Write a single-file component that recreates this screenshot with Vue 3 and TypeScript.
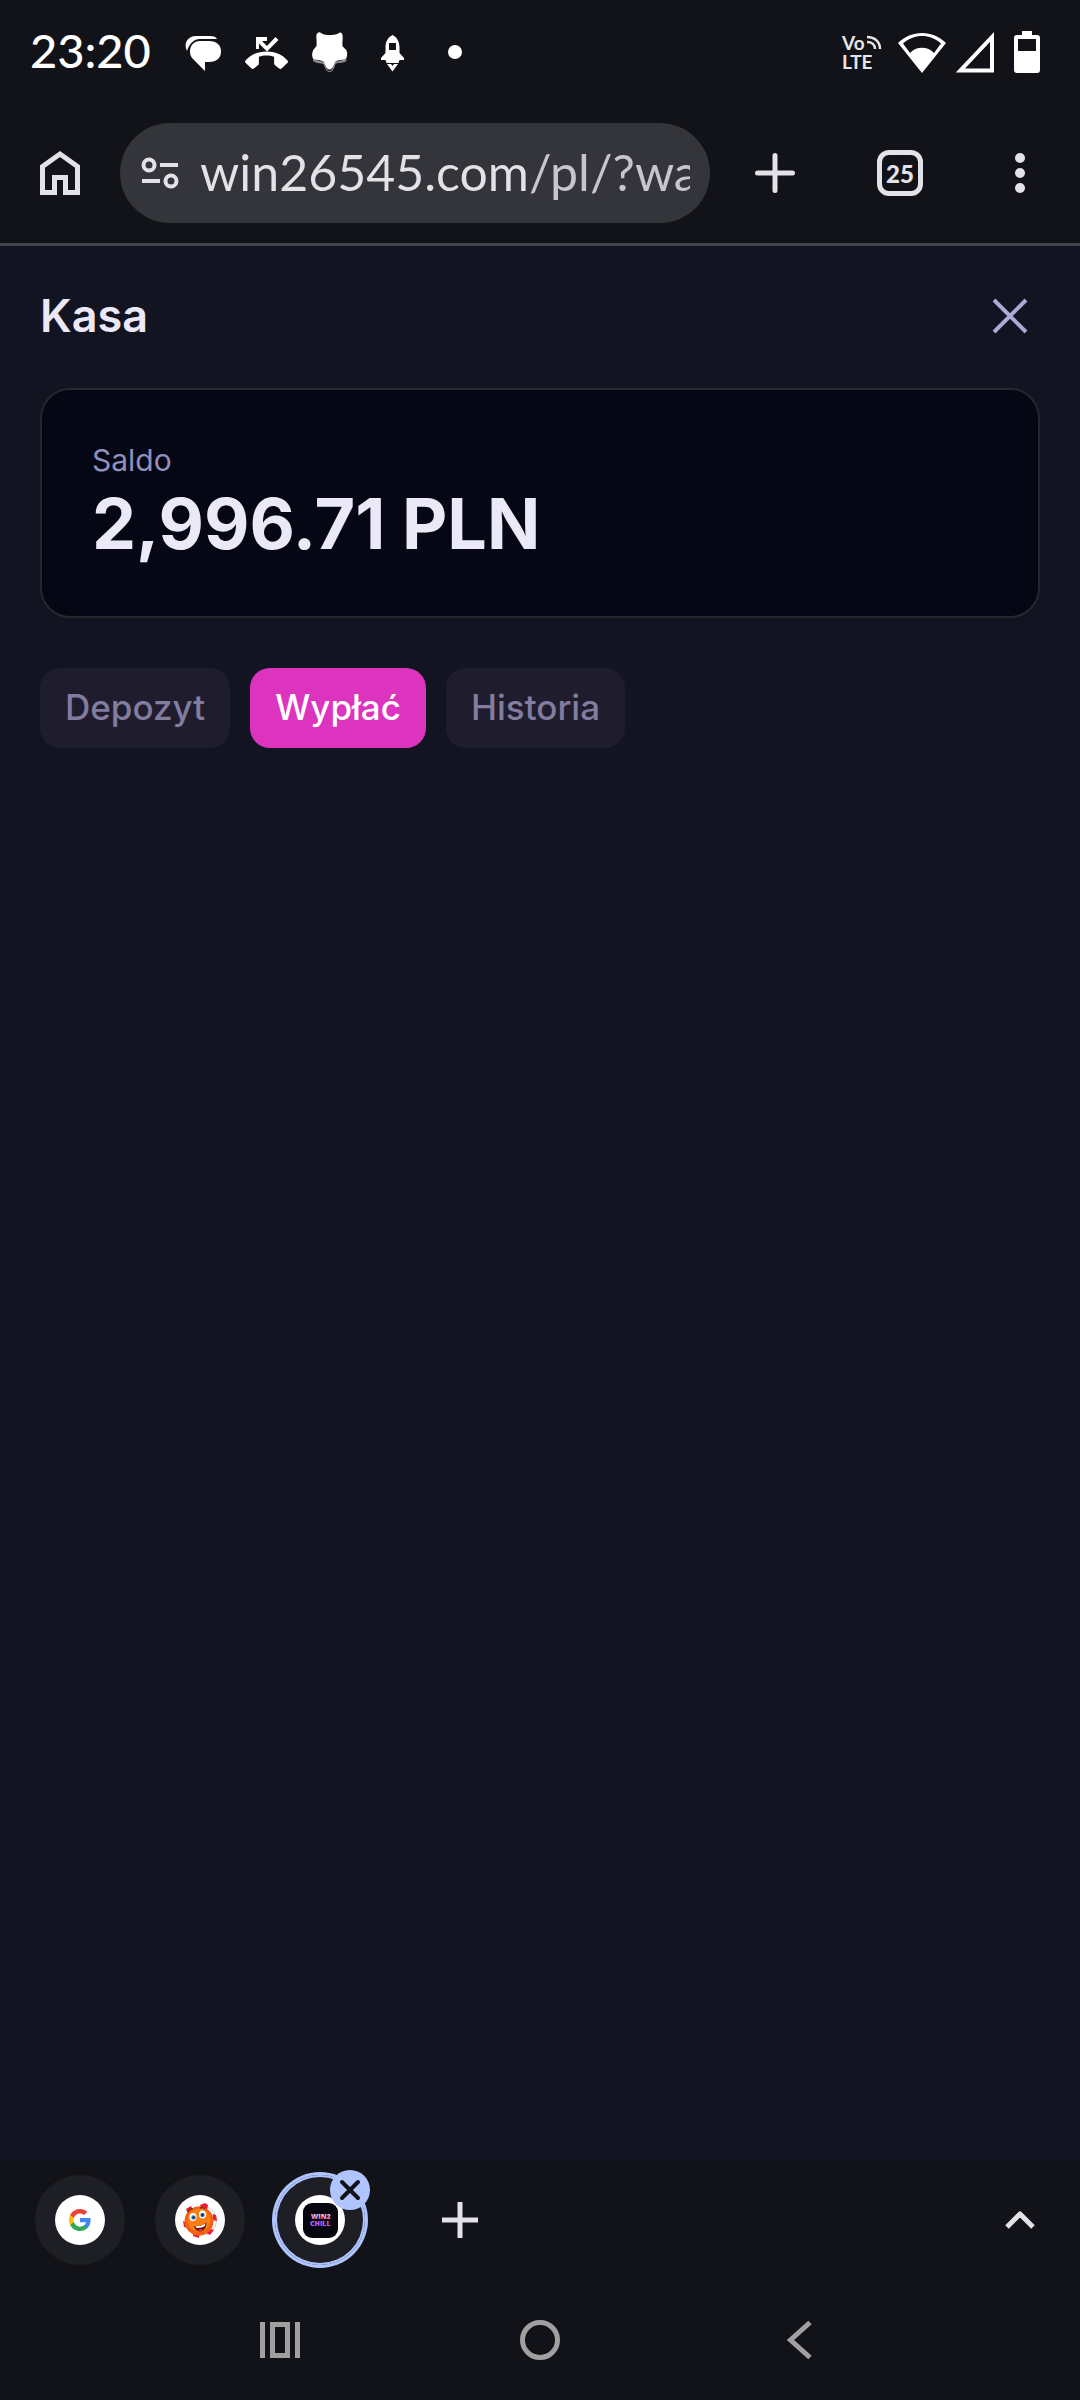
<script setup lang="ts">
import { ref } from 'vue'

const address = ref('win26545.com/pl/?wa')
const tabs = ['Depozyt', 'Wypłać', 'Historia']
const activeTab = ref('Wypłać')
</script>

<template>
  <div class="screen">
    <div class="status-bar">
      <time class="clock">23:20</time>
      <div class="notifications">
        <svg width="43" height="44" viewBox="0 0 43 44" fill="#fff">
          <path d="M5 21C1 13 6 6 14 6h14c4 0 6 1 7 3H18C11 9 7 15 5 21Z" />
          <path d="M18 11h9c8 0 12 4.500 12 10.500S35 32 27 32h-4v9L11 29c-2-2-3-4-3-7.500C8 15.500 12 11 18 11Z" />
        </svg>
        <svg width="43" height="44" viewBox="0 0 43 44" fill="#fff">
          <path d="M11 7h11v4h-5l5 5 8.500-9 3 3L22 21.500l-8-8V19h-3Z" />
          <path d="M21.500 21.500C13 21.500 5.500 24.500.5 30.500c-.8 1-.6 1.800.2 2.600l5.500 5.200c.9.900 1.800.9 2.700.2l4-3.200c.8-.7 1-1.300 1-2.300v-6.200c4.500-1.800 10.500-1.800 15.200 0V33c0 1 .2 1.600 1 2.300l4 3.200c.9.700 1.800.7 2.700-.2l5.500-5.200c.8-.8 1-1.600.2-2.600-5-6-12.500-9-21-9Z" />
        </svg>
        <svg width="43" height="44" viewBox="0 0 43 44">
          <path d="M5 27c5 5 9 4 12 5 1 5 2 9 4.500 9S25 37 26 32c3-1 7 0 12-5l.5 4c-5 3-8 1-11 3-1 4-3 8-6 8s-4.500-4-6-8c-3-1-6 0-10.500-3Z" fill="#8b8c90" />
          <path d="M9 4c1-2 3-2 4-1 3 2 6 2 8.500 2S28 5 31 3c2-1 3 0 3.500 2 .5 4-.5 8 0 11 1 2 4 3 4.500 6s0 5-1 6.500c-3 2-8 1-10.500 3-2 3-3 8-6 8s-4-5-6-8c-3-2-7.500-1-10.500-3-1-2-1-4-.5-6.500.5-3 3-4 4-6 .5-4-.5-8 0-12Z" fill="#fff" />
        </svg>
        <svg width="43" height="44" viewBox="0 0 43 44" fill="#fff">
          <path fill-rule="evenodd" d="M21.500 5c-4.500 2-7 7-7 12v6l-4.500 5v2h4.500l1 3h12l1-3H33v-2l-4.500-5v-6c0-5-2.500-10-7-12Zm-3.500 8h7v7h-7Z" />
          <path d="M16 34h4l1.500 2 1.500-2h4l-5.500 7.500Z" />
        </svg>
        <svg width="43" height="44" viewBox="0 0 43 44" fill="#fff"><circle cx="21" cy="22" r="7" /></svg>
      </div>
      <div class="signals">
        <div class="volte">
          <span>Vo</span><span>LTE</span>
          <svg class="volte-waves" width="15" height="15" viewBox="0 0 15 15" fill="none" stroke="#e6e6e8" stroke-width="2.500">
            <path d="M0 2c8 0 13 5 13 12M0 7c5 0 8 3 8 7" />
          </svg>
        </div>
        <svg width="50" height="44" viewBox="0 0 50 44" fill="#fff">
          <path fill-rule="evenodd" d="M1 13C14-.5 36-.5 49 13L25 43Zm5 .5L13 23c6-7 18-7 24 0l7-9.500C33 3.500 17 3.500 6 13.500Z" />
        </svg>
        <svg width="40" height="44" viewBox="0 0 40 44"><path d="M4.500 40.500h31.500V7Z" fill="none" stroke="#fff" stroke-width="4" /></svg>
        <svg class="battery" width="26" height="44" viewBox="0 0 26 44" fill="#fff">
          <path fill-rule="evenodd" d="M8 1h10v4h5q3 0 3 3v32q0 3-3 3H3q-3 0-3-3V8q0-3 3-3h5ZM4 9v12h18V9Z" />
        </svg>
      </div>
    </div>

    <header class="toolbar">
      <button class="tool" aria-label="Home">
        <svg width="40" height="46" viewBox="0 0 40 46" fill="none" stroke="#e4e2e9" stroke-width="5">
          <path d="M2.500 42.500V16.500L20 4l17.500 12.500v26H25.500V27.500h-11v15Z" />
        </svg>
      </button>
      <div class="omnibox">
        <svg class="site-info" width="40" height="34" viewBox="0 0 40 34" fill="none" stroke="#e4e2e9" stroke-width="4">
          <circle cx="9" cy="9" r="5.500" /><path d="M20 9h18M2 25h18" /><circle cx="31" cy="25" r="5.500" />
        </svg>
        <input v-model="address" class="address" type="text" aria-label="Address" spellcheck="false" />
      </div>
      <button class="tool wide" aria-label="New tab">
        <svg width="40" height="40" viewBox="0 0 40 40" stroke="#e4e2e9" stroke-width="5" stroke-linecap="round"><path d="M20 2.500v35M2.500 20h35" /></svg>
      </button>
      <button class="tool" aria-label="Open tabs"><span class="tab-count">25</span></button>
      <button class="tool" aria-label="Menu">
        <svg width="10" height="40" viewBox="0 0 10 40" fill="#e4e2e9"><circle cx="5" cy="5" r="5" /><circle cx="5" cy="20" r="5" /><circle cx="5" cy="35" r="5" /></svg>
      </button>
    </header>

    <main class="cashier">
      <div class="heading">
        <h1>Kasa</h1>
        <button class="close" aria-label="Zamknij">
          <svg width="36" height="36" viewBox="0 0 36 36" stroke="#aaaad6" stroke-width="4"><path d="M2 2l32 32M34 2L2 34" /></svg>
        </button>
      </div>
      <section class="balance">
        <p class="balance-label">Saldo</p>
        <p class="balance-amount">2,996.71 PLN</p>
      </section>
      <nav class="tabs">
        <button v-for="tab in tabs" :key="tab" class="tab" :class="{ active: tab === activeTab }" @click="activeTab = tab">{{ tab }}</button>
      </nav>
    </main>

    <footer>
      <div class="tab-strip">
        <button class="site" aria-label="Google">
          <span class="favicon">
            <svg width="22" height="22" viewBox="1 1 22 22">
              <path fill="#4285f4" d="M22.560 12.250c0-.78-.07-1.530-.2-2.250H12v4.260h5.920c-.26 1.370-1.040 2.530-2.210 3.310v2.770h3.570c2.080-1.920 3.280-4.740 3.280-8.090z" />
              <path fill="#34a853" d="M12 23c2.970 0 5.460-.98 7.280-2.660l-3.570-2.770c-.98.66-2.230 1.060-3.710 1.060-2.860 0-5.290-1.930-6.160-4.530H2.180v2.840C3.990 20.530 7.700 23 12 23z" />
              <path fill="#fbbc05" d="M5.840 14.090c-.22-.66-.35-1.360-.35-2.090s.13-1.430.35-2.090V7.070H2.180C1.430 8.550 1 10.220 1 12s.43 3.450 1.180 4.930l3.660-2.840z" />
              <path fill="#ea4335" d="M12 5.380c1.620 0 3.060.56 4.210 1.640l3.150-3.150C17.450 2.090 14.970 1 12 1 7.700 1 3.990 3.470 2.180 7.070l3.660 2.840c.87-2.600 3.300-4.530 6.160-4.530z" />
            </svg>
          </span>
        </button>
        <button class="site" aria-label="Casino chip">
          <span class="favicon">
            <svg width="36" height="36" viewBox="0 0 36 36">
              <circle cx="20" cy="18.500" r="14.500" fill="#fff" stroke="#d0cdd0" />
              <path d="M18 3l5-2 3 2-1 5-6-1ZM31 12l3 1 1 6-5-1ZM29 27l3 1-4 5-4-2ZM11 29l7 1-1 6-6-2ZM1 19l4 2 1 5-4-1ZM4 7l5-3 2 4-5 4Z" fill="#ed1c35" />
              <circle cx="17" cy="19" r="14.500" fill="#f55f12" />
              <circle cx="17" cy="18" r="11.500" fill="#fb7d14" />
              <ellipse cx="11" cy="15" rx="3.500" ry="4" fill="#fff" /><ellipse cx="20.500" cy="12.500" rx="3.500" ry="4" fill="#fff" />
              <circle cx="11.500" cy="15.500" r="2.200" fill="#2f7dbd" /><circle cx="20.500" cy="13" r="2.200" fill="#2f7dbd" />
              <circle cx="11.500" cy="15.500" r="1" fill="#111" /><circle cx="20.500" cy="13" r="1" fill="#111" />
              <path d="M6 10q2-4 5-3M18 6q4-1 5 1" fill="none" stroke="#7a2c0c" stroke-width="1.300" />
              <path d="M12 24q7 1 12.500-3.500c0 5-3 9-6.500 9-3 0-5-2.500-6-5.500Z" fill="#62150c" />
              <path d="M13.500 24.300q5.500.2 10-2.800l-.5 2.500q-4 2.500-8.500 2Z" fill="#fff" /><path d="M16 28q3-2 5 0-3 2-5 0Z" fill="#ef3932" />
            </svg>
          </span>
        </button>
        <button class="site current" aria-label="Win2Chill">
          <span class="favicon">
            <svg width="36" height="36" viewBox="0 0 36 36">
              <defs>
                <linearGradient id="neon" gradientUnits="userSpaceOnUse" x1="0" y1="12" x2="0" y2="25">
                  <stop offset="0" stop-color="#ffe3f3" /><stop offset=".45" stop-color="#ed4cae" /><stop offset=".6" stop-color="#cf6cff" /><stop offset="1" stop-color="#9a4ff0" />
                </linearGradient>
              </defs>
              <rect x="1" y="1" width="35" height="35" rx="9" fill="#07050d" />
              <g fill="url(#neon)" class="logo-text"><text x="9" y="17">WIN2</text><text x="8" y="24">CHILL</text></g>
            </svg>
          </span>
          <span class="badge">
            <svg width="22" height="22" viewBox="0 0 22 22" stroke="#121318" stroke-width="4" stroke-linecap="round"><path d="M3 3l16 16M19 3L3 19" /></svg>
          </span>
        </button>
        <button class="strip-button" aria-label="New tab">
          <svg width="36" height="36" viewBox="0 0 36 36" stroke="#e4e2e9" stroke-width="5"><path d="M18 0v36M0 18h36" /></svg>
        </button>
        <button class="strip-button expand" aria-label="Expand">
          <svg width="32" height="22" viewBox="0 0 32 22" fill="none" stroke="#e4e2e9" stroke-width="5" stroke-linejoin="round"><path d="M3 18L16 5l13 13" /></svg>
        </button>
      </div>
      <nav class="system-nav">
        <button aria-label="Recent apps">
          <svg width="40" height="36" viewBox="0 0 40 36" fill="none" stroke="#a0a0a1" stroke-width="5"><path d="M2.500 0v36M37.500 0v36M12.500 2.500h15v31h-15Z" /></svg>
        </button>
        <button aria-label="Home screen">
          <svg width="40" height="40" viewBox="0 0 40 40" fill="none" stroke="#a0a0a1" stroke-width="5"><circle cx="20" cy="20" r="17.500" /></svg>
        </button>
        <button aria-label="Back">
          <svg width="26" height="40" viewBox="0 0 26 40" fill="none" stroke="#a0a0a1" stroke-width="5"><path d="M23 2.500L3.500 20 23 37.500" /></svg>
        </button>
      </nav>
    </footer>
  </div>
</template>

<style>
body {
  background: #121318;
}
</style>

<style scoped>
.screen {
  display: flex;
  flex-direction: column;
  min-height: 100vh;
  background: #121318;
  color: #fff;
  font-family: Inter, "Noto Sans", sans-serif;
}
button {
  display: flex;
  align-items: center;
  justify-content: center;
  padding: 0;
  border: 0;
  background: none;
  color: inherit;
  font: inherit;
  cursor: pointer;
}
svg {
  display: block;
  flex: none;
}
.status-bar {
  display: flex;
  align-items: center;
  height: 103px;
  padding: 0 40px 0 30px;
  font-family: Lato, sans-serif;
}
.clock {
  width: 152px;
  margin-bottom: 3px;
  font-size: 47px;
  font-weight: 500;
  line-height: 54px;
}
.notifications {
  display: flex;
  gap: 20px;
}
.signals {
  display: flex;
  align-items: center;
  gap: 9px;
  margin-left: auto;
}
.volte {
  position: relative;
  display: flex;
  flex-direction: column;
  width: 46px;
  color: #e6e6e8;
  font-size: 19px;
  font-weight: 700;
  line-height: 19px;
}
.volte-waves {
  position: absolute;
  top: 2px;
  left: 25px;
}
.battery {
  margin-left: 9px;
}
.toolbar {
  display: flex;
  align-items: center;
  height: 140px;
  border-bottom: 3px solid #45464c;
}
.tool {
  flex: none;
  width: 120px;
  height: 100px;
}
.wide {
  width: 130px;
}
.omnibox {
  display: flex;
  flex: 1;
  align-items: center;
  gap: 20px;
  min-width: 0;
  height: 100px;
  padding: 0 20px;
  border-radius: 50px;
  background: #34353a;
}
.address {
  flex: 1;
  min-width: 0;
  height: 66px;
  margin-bottom: 2px;
  padding: 0;
  border: 0;
  outline: 0;
  background: linear-gradient(90deg, #e4e2e9 328px, #c7c5d0 328px);
  background-clip: text;
  color: #e4e2e9;
  font-family: Lato, sans-serif;
  font-size: 50px;
  -webkit-text-fill-color: transparent;
}
.tab-count {
  display: flex;
  align-items: center;
  justify-content: center;
  box-sizing: border-box;
  width: 46px;
  height: 46px;
  border: 5px solid #e4e2e9;
  border-radius: 12px;
  color: #e4e2e9;
  font-family: Lato, sans-serif;
  font-size: 24px;
  font-weight: 900;
}
.cashier {
  flex: 1;
  padding: 0 40px;
  background: #121422;
}
.heading {
  display: flex;
  align-items: center;
  justify-content: space-between;
  height: 140px;
  margin-bottom: 2px;
}
h1 {
  margin: 0;
  color: #ebe8f7;
  font-size: 45px;
  font-weight: 600;
  line-height: 60px;
}
.close {
  width: 60px;
  height: 60px;
}
.balance {
  padding: 48px 50px 51px;
  border: 2px solid #27272e;
  border-radius: 30px;
  background: #060714;
}
.balance p {
  margin: 0;
}
.balance-label {
  color: #8f91bd;
  font-size: 30px;
  line-height: 45px;
}
.balance-amount {
  color: #ebe8f7;
  font-size: 70px;
  font-weight: 700;
  line-height: 82px;
}
.tabs {
  display: flex;
  gap: 20px;
  margin-top: 50px;
}
.tab {
  height: 80px;
  padding: 0 25px 2px;
  border-radius: 20px;
  background: #1e1c2d;
  color: #827c9f;
  font-size: 35px;
  font-weight: 500;
}
.active {
  background: #dc34be;
  color: #fff;
}
.tab-strip {
  display: flex;
  align-items: center;
  gap: 30px;
  height: 120px;
  padding: 0 15px 0 35px;
}
.site {
  position: relative;
  width: 90px;
  height: 90px;
  border-radius: 50%;
  background: #1e1f24;
}
.current {
  box-shadow: 0 0 0 3px #b0c5ff, inset 0 0 0 2px #b0c5ff;
}
.favicon {
  display: flex;
  align-items: center;
  justify-content: center;
  width: 50px;
  height: 50px;
  border-radius: 50%;
  background: #fff;
}
.logo-text {
  font-family: "Open Sans", sans-serif;
  font-size: 7px;
  font-weight: 800;
}
.badge {
  position: absolute;
  top: -5px;
  right: -5px;
  display: flex;
  align-items: center;
  justify-content: center;
  width: 40px;
  height: 40px;
  border-radius: 50%;
  background: #b0c5ff;
}
.strip-button {
  width: 90px;
  height: 90px;
  margin-left: 20px;
}
.expand {
  margin-left: auto;
}
.system-nav {
  display: flex;
  justify-content: center;
  height: 120px;
}
.system-nav button {
  width: 260px;
}
</style>
